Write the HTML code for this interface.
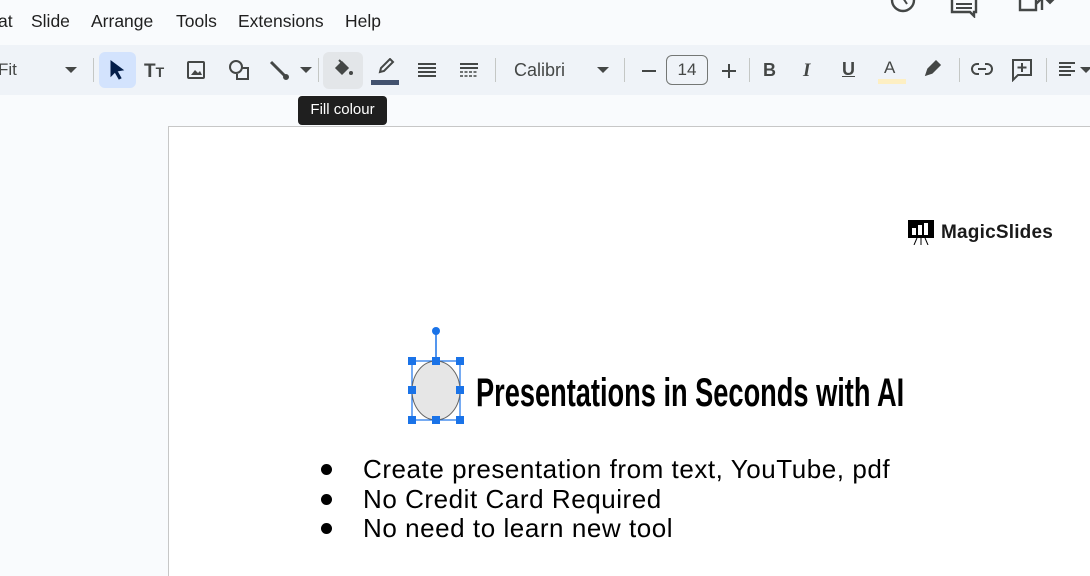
<!DOCTYPE html>
<html><head><style>
*{margin:0;padding:0;box-sizing:border-box}
body{width:1090px;height:568px;overflow:hidden;background:#f9fbfd;font-family:"Liberation Sans",sans-serif;position:relative;color:#1f1f1f}
.menu{position:absolute;top:11px;font-size:17.5px;color:#1f1f1f}
.tb{position:absolute;left:0;top:45px;width:1090px;height:50px;background:#eff3f8}
.a{position:absolute}
svg.i{position:absolute;fill:none;stroke:#444746;stroke-width:2}
.sep{position:absolute;top:13px;width:1px;height:24px;background:#c4c7c5}
.slide{position:absolute;left:168px;top:126px;width:930px;height:450px;background:#fff;border-left:1px solid #c7c7c7;border-top:1px solid #c7c7c7}
.h{position:absolute;left:476px;top:371px;font-family:"Liberation Sans Narrow","Liberation Sans",sans-serif;font-weight:bold;font-size:40px;color:#000;white-space:nowrap;transform:scaleX(0.68);transform-origin:left top}
.b{position:absolute;left:363px;font-size:26px;letter-spacing:0.55px;color:#000;white-space:nowrap}
.dot{position:absolute;left:321px;width:11px;height:11px;border-radius:50%;background:#000}
.hd{position:absolute;width:8px;height:8px;background:#1a73e8}
</style></head><body>
<div class="menu" style="left:-2px">at</div>
<div class="menu" style="left:31px">Slide</div>
<div class="menu" style="left:91px">Arrange</div>
<div class="menu" style="left:176px">Tools</div>
<div class="menu" style="left:238px">Extensions</div>
<div class="menu" style="left:345px">Help</div>
<svg class="i" style="left:888px;top:-6px" width="30" height="24" viewBox="0 0 30 24"><circle cx="15" cy="6" r="11" stroke-width="2.4"/><path d="M15 4l4 6"/></svg>
<svg class="i" style="left:950px;top:-4px" width="30" height="22" viewBox="0 0 30 22"><path d="M2 2h24v14h-2v4l-4-4H2z" stroke-width="2.4"/><path d="M6 8h16M6 12h16"/></svg>
<svg class="i" style="left:1018px;top:-4px" width="50" height="20" viewBox="0 0 50 20"><path d="M2 2v12h16V2M18 8l6-6v12" stroke-width="2.4"/><path d="M28 3l4 4 4-4z" fill="#444746"/></svg>

<div class="tb">
 <div class="a" style="left:-2px;top:15px;font-size:17px;color:#444746">Fit</div>
 <svg class="i" style="left:65px;top:22px" width="12" height="7"><path d="M0 0h12L6 6z" fill="#444746" stroke="none"/></svg>
 <div class="sep" style="left:93px"></div>
 <div class="a" style="left:99px;top:7px;width:37px;height:36px;border-radius:6px;background:#d3e3fd"></div>
 <svg class="i" style="left:107px;top:14px" width="20" height="22" viewBox="0 0 20 22"><path d="M4 2l12 9-6 1 4 7-2 1-4-7-4 4z" fill="#041e49" stroke="#041e49" stroke-width="1"/></svg>
 <div class="a" style="left:144px;top:16px;font-size:19px;font-weight:bold;color:#444746">T<span style="font-size:14px">T</span></div>
 <svg class="i" style="left:186px;top:15px" width="20" height="20" viewBox="0 0 20 20"><rect x="2" y="2" width="16" height="16" rx="1"/><path d="M5 15l4-5 3 3 2-2 2 4z" fill="#444746" stroke="none"/></svg>
 <svg class="i" style="left:228px;top:14px" width="24" height="24" viewBox="0 0 24 24"><circle cx="8" cy="8" r="6"/><path d="M14 9h6v11H9v-5"/></svg>
 <svg class="i" style="left:268px;top:14px" width="22" height="22" viewBox="0 0 22 22"><path d="M3 3l16 16" stroke-width="3"/><circle cx="18" cy="18" r="2" fill="#444746"/></svg>
 <svg class="i" style="left:300px;top:22px" width="12" height="7"><path d="M0 0h12L6 6z" fill="#444746" stroke="none"/></svg>
 <div class="sep" style="left:318px"></div>
 <div class="a" style="left:323px;top:7px;width:40px;height:37px;border-radius:6px;background:#e3e6e9"></div>
 <svg class="i" style="left:333px;top:14px" width="22" height="20" viewBox="0 0 22 20"><path d="M3 9l6-6 6 6-6 6z" fill="#444746" stroke-width="1.5"/><path d="M6 1l3 3"/><circle cx="18" cy="14" r="2" fill="#444746" stroke="none"/></svg>
 <svg class="i" style="left:375px;top:13px" width="22" height="16" viewBox="0 0 22 16"><path d="M5 14l1-4 9-9 3 3-9 9z"/></svg>
 <div class="a" style="left:371px;top:35px;width:28px;height:5px;background:#42526e"></div>
 <svg class="i" style="left:417px;top:17px" width="20" height="16" viewBox="0 0 20 16"><path d="M1 2h18M1 6h18M1 10h18M1 14h18" stroke-width="2"/></svg>
 <svg class="i" style="left:459px;top:17px" width="20" height="16" viewBox="0 0 20 16"><path d="M1 2h18M1 6h18" stroke-width="2"/><path d="M1 10h18M1 14h18" stroke-dasharray="3 1.5" stroke-width="1.6"/></svg>
 <div class="sep" style="left:495px"></div>
 <div class="a" style="left:514px;top:15px;font-size:18px;color:#444746">Calibri</div>
 <svg class="i" style="left:597px;top:22px" width="12" height="7"><path d="M0 0h12L6 6z" fill="#444746" stroke="none"/></svg>
 <div class="sep" style="left:624px"></div>
 <div class="a" style="left:642px;top:25px;width:14px;height:2px;background:#444746"></div>
 <div class="a" style="left:666px;top:10px;width:42px;height:30px;border:1.5px solid #747775;border-radius:6px;font-size:17px;text-align:center;line-height:27px;color:#444746">14</div>
 <div class="a" style="left:722px;top:25px;width:14px;height:2px;background:#444746"></div>
 <div class="a" style="left:728px;top:19px;width:2px;height:14px;background:#444746"></div>
 <div class="sep" style="left:749px"></div>
 <div class="a" style="left:763px;top:15px;font-size:18px;font-weight:bold;color:#444746">B</div>
 <div class="a" style="left:803px;top:15px;font-size:19px;font-style:italic;font-family:'Liberation Serif',serif;font-weight:bold;color:#444746">I</div>
 <div class="a" style="left:842px;top:14px;font-size:18px;font-weight:bold;color:#444746;text-decoration:underline">U</div>
 <div class="a" style="left:884px;top:13px;font-size:17px;color:#444746">A</div>
 <div class="a" style="left:878px;top:34px;width:28px;height:5px;background:#fdefc3"></div>
 <svg class="i" style="left:923px;top:13px" width="20" height="20" viewBox="0 0 20 20"><path d="M3 17l2-6 8-8 4 4-8 8z" fill="#444746" stroke-width="1.5"/></svg>
 <div class="sep" style="left:959px"></div>
 <svg class="i" style="left:971px;top:17px" width="22" height="14" viewBox="0 0 22 14"><path d="M8 2H6a5 5 0 000 10h2M14 2h2a5 5 0 010 10h-2M7 7h8"/></svg>
 <svg class="i" style="left:1011px;top:13px" width="22" height="24" viewBox="0 0 22 24"><path d="M2 2h18v15H7l-5 5z"/><path d="M11 5v9M6.5 9.5h9"/></svg>
 <div class="sep" style="left:1046px"></div>
 <svg class="i" style="left:1058px;top:16px" width="20" height="18" viewBox="0 0 20 18"><path d="M1 2h16M1 6h12M1 10h16M1 14h12" stroke-width="2"/></svg>
 <svg class="i" style="left:1080px;top:22px" width="12" height="7"><path d="M0 0h12L6 6z" fill="#444746" stroke="none"/></svg>
</div>

<div class="slide"></div>
<div class="a" style="left:298px;top:96px;width:89px;height:29px;background:#1f1f1f;border-radius:4px;color:#fff;font-size:15px;line-height:28px;text-align:center">Fill colour</div>

<svg class="a" style="left:907px;top:219px" width="28" height="26" viewBox="0 0 28 26"><rect x="1" y="1" width="26" height="18" fill="#000"/><rect x="5" y="9" width="4" height="7" fill="#fff"/><rect x="11" y="6" width="4" height="10" fill="#fff"/><rect x="17" y="4" width="4" height="12" fill="#fff"/><path d="M10 19l-3 7M14 19v7M18 19l3 7" stroke="#000" stroke-width="1"/></svg>
<div class="a" style="left:941px;top:222px;font-size:19px;font-weight:bold;letter-spacing:0.2px;color:#1a1a1a">MagicSlides</div>

<svg class="a" style="left:405px;top:325px" width="62" height="102" viewBox="0 0 62 102">
 <line x1="31" y1="7" x2="31" y2="36" stroke="#1a73e8" stroke-width="1.5"/>
 <circle cx="31" cy="6" r="4" fill="#1a73e8"/>
 <rect x="7" y="36" width="48" height="59" fill="none" stroke="#1a73e8" stroke-width="1.2"/>
 <ellipse cx="31" cy="65.5" rx="24" ry="29.5" fill="#e6e6e6" stroke="#666" stroke-width="1"/>
</svg>
<div class="hd" style="left:408px;top:357px"></div><div class="hd" style="left:432px;top:357px"></div><div class="hd" style="left:456px;top:357px"></div>
<div class="hd" style="left:408px;top:386px"></div><div class="hd" style="left:456px;top:386px"></div>
<div class="hd" style="left:408px;top:416px"></div><div class="hd" style="left:432px;top:416px"></div><div class="hd" style="left:456px;top:416px"></div>

<div class="h">Presentations in Seconds with AI</div>
<div class="dot" style="top:464px"></div><div class="b" style="top:454px">Create presentation from text, YouTube, pdf</div>
<div class="dot" style="top:494px"></div><div class="b" style="top:484px">No Credit Card Required</div>
<div class="dot" style="top:523px"></div><div class="b" style="top:513px">No need to learn new tool</div>
</body></html>
